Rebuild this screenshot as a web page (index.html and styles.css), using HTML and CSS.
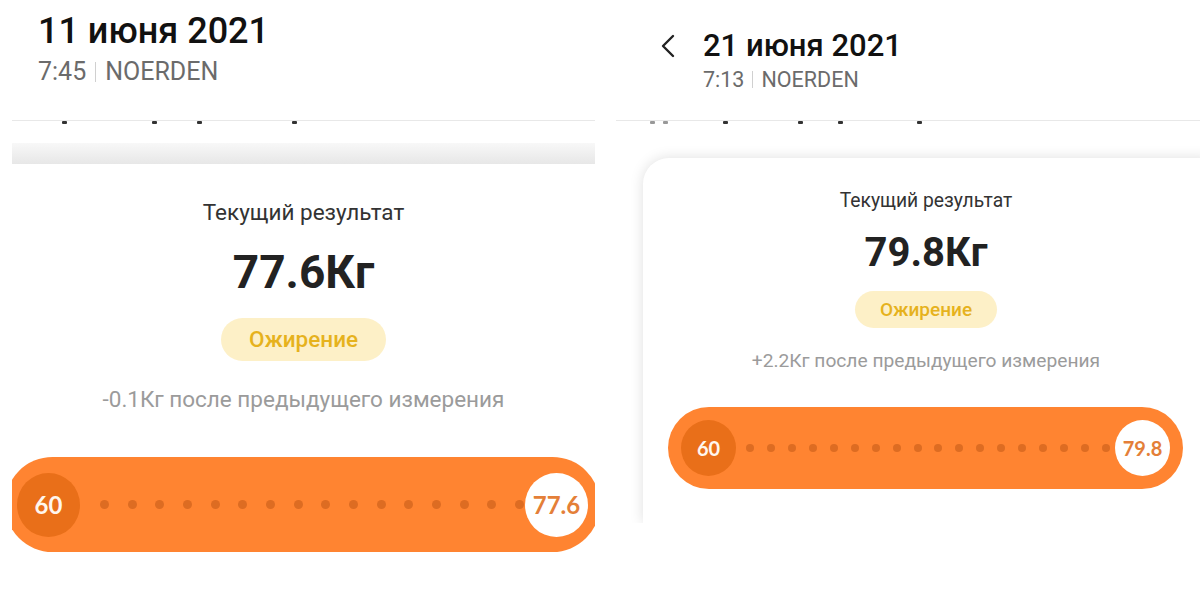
FILE: index.html
```html
<!DOCTYPE html>
<html lang="ru">
<head>
    <meta charset="UTF-8">
    <meta name="viewport" content="width=device-width, initial-scale=1.0">
    <title>Вес — сравнение</title>
    <link rel="stylesheet" href="styles.css">
</head>
<body>
    <div class="page">
        <!-- Left screenshot: 11 June -->
        <section class="shot shot-left">
            <div class="head">
                <div class="titles">
                    <h1 class="date">11 июня 2021</h1>
                    <p class="meta">7:45<span class="sep"></span>NOERDEN</p>
                </div>
            </div>
            <div class="rule"></div>
            <div class="marks"><span></span><span></span><span></span><span></span></div>
            <div class="fade"></div>
            <div class="card">
                <p class="label">Текущий результат</p>
                <p class="value">77.6Кг</p>
                <span class="badge">Ожирение</span>
                <p class="diff">-0.1Кг после предыдущего измерения</p>
                <div class="bar">
                    <span class="start">60</span>
                    <div class="dots">
                        <i></i><i></i><i></i><i></i><i></i><i></i><i></i><i></i>
                        <i></i><i></i><i></i><i></i><i></i><i></i><i></i><i></i>
                    </div>
                    <span class="end">77.6</span>
                </div>
            </div>
        </section>

        <!-- Right screenshot: 21 June -->
        <section class="shot shot-right">
            <div class="head">
                <svg class="back" width="18" height="24" viewBox="0 0 18 24">
                    <path d="M15 2 L5 12 L15 22" fill="none" stroke="#222" stroke-width="2.4" stroke-linecap="round" stroke-linejoin="round"/>
                </svg>
                <div class="titles">
                    <h1 class="date">21 июня 2021</h1>
                    <p class="meta">7:13<span class="sep"></span>NOERDEN</p>
                </div>
            </div>
            <div class="rule"></div>
            <div class="marks"><span></span><span></span><span></span><span></span><span></span><span></span></div>
            <div class="card">
                <p class="label">Текущий результат</p>
                <p class="value">79.8Кг</p>
                <span class="badge">Ожирение</span>
                <p class="diff">+2.2Кг после предыдущего измерения</p>
                <div class="bar">
                    <span class="start">60</span>
                    <div class="dots">
                        <i></i><i></i><i></i><i></i><i></i><i></i><i></i><i></i><i></i>
                        <i></i><i></i><i></i><i></i><i></i><i></i><i></i><i></i><i></i>
                    </div>
                    <span class="end">79.8</span>
                </div>
            </div>
        </section>
    </div>
</body>
</html>
```
FILE: styles.css
```css
* {
    margin: 0;
    padding: 0;
    box-sizing: border-box;
}
body {
    font-family: Roboto, 'Noto Sans', sans-serif;
    background-color: #ffffff;
    color: #222;
}
.page {
    display: flex;
    width: 1200px;
    height: 595px;
    overflow: hidden;
}
.shot {
    display: flex;
    flex-direction: column;
    overflow: hidden;
}
/* Header */
.head {
    display: flex;
    align-items: flex-start;
}
.date {
    font-weight: 500;
    color: #111;
}
.meta {
    display: flex;
    align-items: center;
    color: #6b6b6b;
}
.sep {
    width: 1px;
    height: 0.8em;
    background-color: #d0d0d0;
    margin: 0 9px;
}
.rule {
    height: 1px;
    background-color: #e8e8e8;
}
.marks {
    display: flex;
    height: 4px;
}
.marks span {
    width: 5px;
    height: 3px;
    background-color: #333;
    border-radius: 1px;
}
/* Card */
.card {
    flex: 1;
    display: flex;
    flex-direction: column;
    align-items: center;
    text-align: center;
    background-color: #ffffff;
}
.label {
    color: #333;
}
.value {
    font-weight: 700;
    color: #222;
}
.badge {
    display: inline-block;
    background-color: #fdf0c7;
    color: #e6b21d;
    font-weight: 500;
}
.diff {
    color: #9b9b9b;
}
.bar {
    align-self: flex-start;
    display: flex;
    align-items: center;
    background-color: #ff8431;
}
.start, .end {
    display: flex;
    align-items: center;
    justify-content: center;
    border-radius: 50%;
    font-family: Lato, 'DejaVu Sans', sans-serif;
    font-weight: 700;
    flex-shrink: 0;
}
.start {
    background-color: #e96f19;
    color: #fff6ee;
}
.end {
    background-color: #ffffff;
    color: #e47f38;
}
.dots {
    flex: 1;
    display: flex;
    justify-content: space-between;
    align-items: center;
}
.dots i {
    border-radius: 50%;
    background-color: #dd6c22;
}

/* Left shot */
.shot-left {
    width: 600px;
    padding: 0 5px 0 12px;
}
.shot-left .head {
    padding: 10px 0 0 26px;
}
.shot-left .date {
    font-size: 36px;
    line-height: 42px;
}
.shot-left .meta {
    font-size: 25px;
    line-height: 30px;
    margin-top: 5px;
}
.shot-left .rule {
    margin-top: 33px;
}
.shot-left .marks span:nth-child(1) { margin-left: 50px; }
.shot-left .marks span:nth-child(2) { margin-left: 85px; }
.shot-left .marks span:nth-child(3) { margin-left: 40px; }
.shot-left .marks span:nth-child(4) { margin-left: 90px; }
.fade {
    margin-top: 18px;
    height: 21px;
    background: linear-gradient(to bottom, #f8f8f8, #e7e7e7);
}
.shot-left .card {
    padding-top: 35px;
    overflow: hidden;
}
.shot-left .label {
    font-size: 22.5px;
    line-height: 27px;
}
.shot-left .value {
    font-size: 46px;
    line-height: 54px;
    margin-top: 19px;
}
.shot-left .badge {
    margin-top: 19px;
    height: 43px;
    line-height: 43px;
    padding: 0 28px;
    border-radius: 22px;
    font-size: 22.5px;
}
.shot-left .diff {
    margin-top: 25px;
    font-size: 22.5px;
    line-height: 26px;
}
.shot-left .bar {
    margin-top: 45px;
    margin-left: -7px;
    width: 595px;
    height: 95px;
    padding: 0 12px;
    border-radius: 48px;
}
.shot-left .start, .shot-left .end {
    width: 63px;
    height: 64px;
    font-size: 24px;
}
.shot-left .dots {
    padding: 0 1px 0 20px;
}
.shot-left .dots i {
    width: 9px;
    height: 9px;
}

/* Right shot */
.shot-right {
    flex: 1;
    height: 523px;
}
.shot-right .head {
    padding: 28px 0 0 58px;
}
.back {
    margin-top: 6px;
    margin-right: 27px;
}
.shot-right .date {
    font-size: 31px;
    line-height: 36px;
}
.shot-right .meta {
    font-size: 21.5px;
    line-height: 25px;
    margin-top: 3px;
}
.shot-right .sep {
    margin: 0 8px;
}
.shot-right .rule {
    margin: 28px 0 0 16px;
}
.shot-right .marks {
    margin-left: 16px;
}
.shot-right .marks span:nth-child(1) { margin-left: 34px; background-color: #999; }
.shot-right .marks span:nth-child(2) { margin-left: 8px; background-color: #999; }
.shot-right .marks span:nth-child(3) { margin-left: 55px; }
.shot-right .marks span:nth-child(4) { margin-left: 70px; }
.shot-right .marks span:nth-child(5) { margin-left: 35px; }
.shot-right .marks span:nth-child(6) { margin-left: 74px; }
.shot-right .card {
    margin: 33px 0 0 43px;
    width: 566px;
    padding-top: 32px;
    border-radius: 26px 0 0 0;
    box-shadow: 0 0 14px rgba(0, 0, 0, 0.13);
}
.shot-right .label {
    font-size: 19.3px;
    line-height: 22px;
}
.shot-right .value {
    font-size: 40px;
    line-height: 46px;
    margin-top: 18px;
}
.shot-right .badge {
    margin-top: 15px;
    height: 37px;
    line-height: 37px;
    padding: 0 25px;
    border-radius: 19px;
    font-size: 19px;
}
.shot-right .diff {
    margin-top: 22px;
    font-size: 19.2px;
    line-height: 22px;
}
.shot-right .bar {
    margin: 35px 0 0 25px;
    width: 515px;
    height: 82px;
    padding: 0 13px;
    border-radius: 41px;
}
.shot-right .start, .shot-right .end {
    width: 55px;
    height: 56px;
    font-size: 20px;
}
.shot-right .dots {
    padding: 0 5px 0 10px;
}
.shot-right .dots i {
    width: 8px;
    height: 8px;
}
```
